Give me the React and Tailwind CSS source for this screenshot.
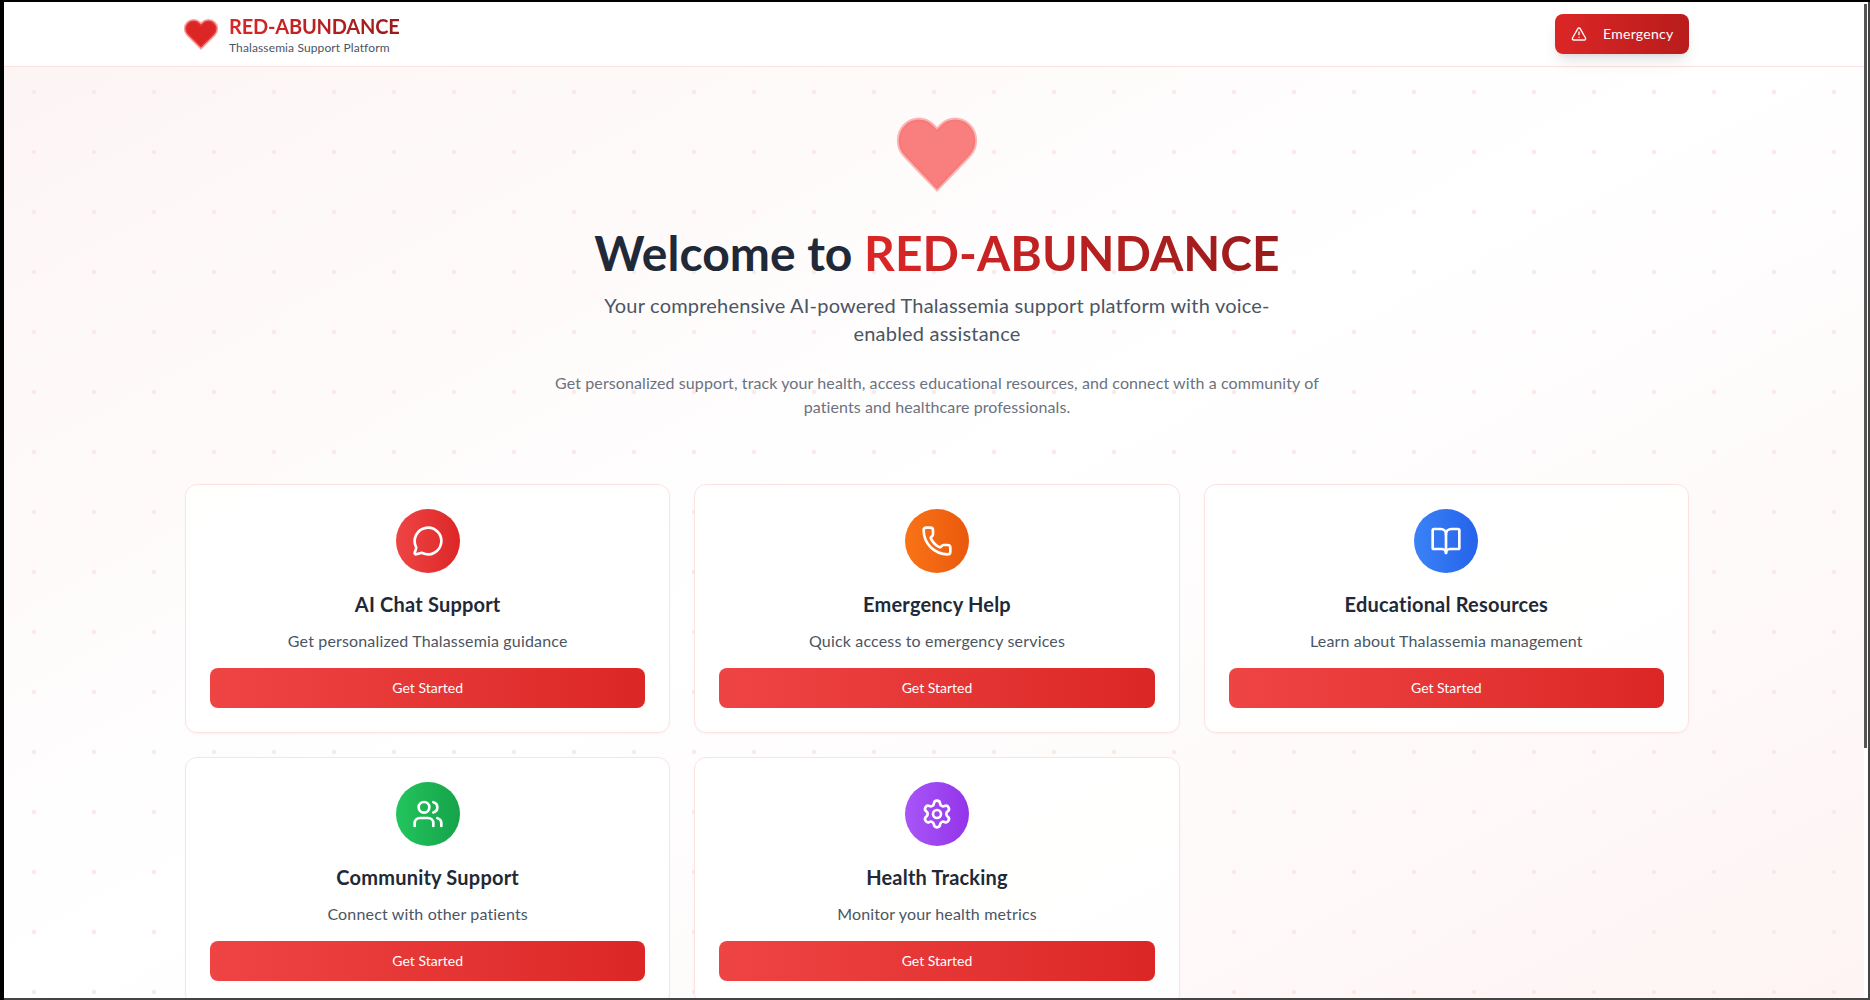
import React from 'react'
import { MessageCircle, Phone, BookOpen, Users, Settings, TriangleAlert } from 'lucide-react'

const HEART = 'M20.84 4.61a5.5 5.5 0 0 0-7.78 0L12 5.67l-1.06-1.06a5.5 5.5 0 0 0-7.78 7.78l1.06 1.06L12 21.23l7.78-7.78 1.06-1.06a5.5 5.5 0 0 0 0-7.78z'

const cards = [
  { title: 'AI Chat Support', text: 'Get personalized Thalassemia guidance', Icon: MessageCircle, color: 'from-[#ef4444] to-[#dc2626]' },
  { title: 'Emergency Help', text: 'Quick access to emergency services', Icon: Phone, color: 'from-[#f97316] to-[#ea580c]' },
  { title: 'Educational Resources', text: 'Learn about Thalassemia management', Icon: BookOpen, color: 'from-[#3b82f6] to-[#2563eb]' },
  { title: 'Community Support', text: 'Connect with other patients', Icon: Users, color: 'from-[#22c55e] to-[#16a34a]' },
  { title: 'Health Tracking', text: 'Monitor your health metrics', Icon: Settings, color: 'from-[#a855f7] to-[#9333ea]' },
]

const Card = ({ title, text, Icon, color }) => (
  <div className="h-[249px] rounded-xl border border-[#fee2e2] bg-white/90 px-6 pt-6 pb-6 shadow-[0_1px_2px_rgba(0,0,0,0.04)] flex flex-col items-center">
    <div className={`w-16 h-16 rounded-full bg-gradient-to-r ${color} flex items-center justify-center`}>
      <Icon className="w-8 h-8 text-white" strokeWidth={2} />
    </div>
    <h3 className="mt-[17px] text-xl leading-7 font-bold tracking-[0.01em] text-[#1f2937]">{title}</h3>
    <p className="mt-[11px] text-base leading-6 tracking-[0.01em] text-[#4b5563]">{text}</p>
    <button className="mt-[15px] w-full h-10 rounded-lg bg-gradient-to-r from-[#ef4444] to-[#dc2626] text-white text-sm">
      Get Started
    </button>
  </div>
)

export default function App() {
  return (
    <div className="h-screen overflow-hidden bg-black pl-1 pt-0.5 font-['Lato',sans-serif]">
      <div className="relative h-full overflow-hidden border-b-2 border-[#444] bg-gradient-to-br from-[#fdf4f4] via-white to-[#fef4f4]">
        <div className="absolute inset-0 bg-[radial-gradient(circle,#fbe9e9_2px,transparent_2.5px)] bg-[size:60px_60px]" />

        <header className="relative h-[65px] bg-white border-b border-[#fee2e2]">
          <div className="w-[1504px] ml-[181px] h-full flex items-center justify-between">
            <div className="flex items-center gap-[10px] -ml-0.5">
              <svg viewBox="0 0 24 24" className="w-9 h-9 blur-[0.4px]" fill="#dc2626" stroke="#ef4444" strokeOpacity="0.5" strokeWidth="2">
                <path d={HEART} />
              </svg>
              <div>
                <h1 className="text-xl leading-7 font-bold tracking-[-0.01em] bg-gradient-to-r from-[#dc2626] to-[#991b1b] bg-clip-text text-transparent">RED-ABUNDANCE</h1>
                <p className="text-xs leading-4 tracking-[0.01em] text-[#4b5563]">Thalassemia Support Platform</p>
              </div>
            </div>
            <button className="w-[134px] h-10 rounded-lg bg-gradient-to-r from-[#dc2626] to-[#b91c1c] text-white text-sm tracking-[0.02em] shadow-lg flex items-center pl-4 gap-4">
              <TriangleAlert className="w-4 h-4" />
              Emergency
            </button>
          </div>
        </header>

        <main className="relative w-[1504px] ml-[181px]">
          <div className="pt-[41px] flex flex-col items-center text-center">
            <svg viewBox="0 0 24 24" preserveAspectRatio="none" className="w-[88px] h-[92px] blur-[0.4px]" fill="#f87171" fillOpacity="0.9" stroke="#f87171" strokeOpacity="0.5">
              <path d={HEART} />
            </svg>
            <h2 className="mt-[29px] text-5xl leading-none font-bold text-[#1f2937]">
              Welcome to <span className="bg-gradient-to-r from-[#dc2626] to-[#991b1b] bg-clip-text text-transparent">RED-ABUNDANCE</span>
            </h2>
            <p className="mt-[14px] w-[672px] text-xl leading-7 tracking-[0.01em] text-[#4b5563]">
              Your comprehensive AI-powered Thalassemia support platform with voice-enabled assistance
            </p>
            <p className="mt-6 w-[768px] text-base leading-6 tracking-[0.006em] text-[#6b7280]">
              Get personalized support, track your health, access educational resources, and connect with a community of patients and healthcare professionals.
            </p>
          </div>
          <div className="mt-[65px] grid grid-cols-3 gap-6">
            {cards.map((c) => <Card key={c.title} {...c} />)}
          </div>
        </main>

        <div className="absolute top-0 right-0 bottom-0 w-[6px] bg-white border-r-2 border-[#444]">
          <div className="mt-0.5 h-[744px] w-[3px] bg-[#555]" />
        </div>
      </div>
    </div>
  )
}
